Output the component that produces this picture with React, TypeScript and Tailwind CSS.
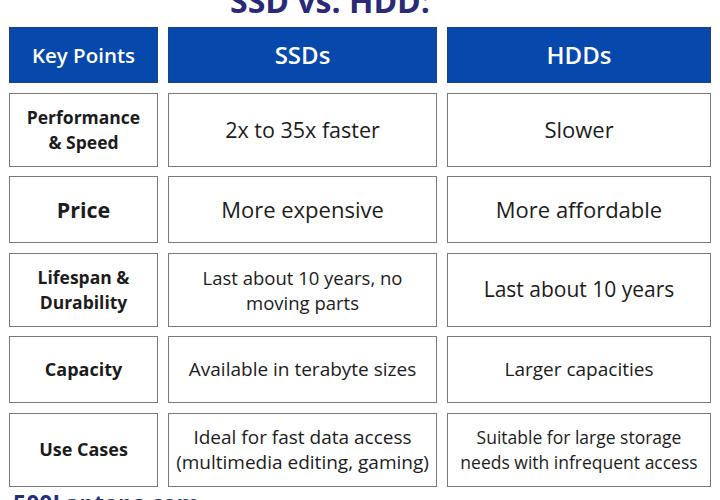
import React from "react";

const font = { fontFamily: '"Open Sans", "Noto Sans", sans-serif' };

function Cell({ children, className = "" }: { children: React.ReactNode; className?: string }) {
  return (
    <div
      className={
        "flex items-center justify-center text-center border-[1.5px] border-[#7a7a7a] bg-white text-[#1c1c1c] leading-[25px] " +
        className
      }
    >
      {children}
    </div>
  );
}

function Head({ children, className = "" }: { children: React.ReactNode; className?: string }) {
  return (
    <div
      className={
        "flex items-center justify-center bg-[#0648ab] border border-[#23407e] text-white font-semibold " +
        className
      }
    >
      {children}
    </div>
  );
}

export default function App() {
  return (
    <div className="w-[720px] h-[500px] bg-white overflow-hidden relative" style={font}>
      <div className="flex flex-col">
        <div className="mt-[-15px] h-[32px] text-center text-[32px] leading-[32px] font-bold text-[#2b2a78] pr-[60px]">
          SSD vs. HDD:
        </div>
        <div className="mt-[10px] ml-[9px] grid grid-cols-[149px_269px_264px] grid-rows-[56px_74px_67px_74px_67px_74px] gap-x-[10px] gap-y-[9.6px]">
          <Head className="text-[20.5px]">Key Points</Head>
          <Head className="text-[24px]">SSDs</Head>
          <Head className="text-[24px]">HDDs</Head>

          <Cell className="font-bold text-[17.5px]">
            Performance
            <br />& Speed
          </Cell>
          <Cell className="text-[21.5px]">2x to 35x faster</Cell>
          <Cell className="text-[22px]">Slower</Cell>

          <Cell className="font-bold text-[21.5px]">Price</Cell>
          <Cell className="text-[22px]">More expensive</Cell>
          <Cell className="text-[22px]">More affordable</Cell>

          <Cell className="font-bold text-[17.5px]">
            Lifespan &amp;
            <br />
            Durability
          </Cell>
          <Cell className="text-[18.5px]">
            Last about 10 years, no
            <br />
            moving parts
          </Cell>
          <Cell className="text-[21px]">Last about 10 years</Cell>

          <Cell className="font-bold text-[18px]">Capacity</Cell>
          <Cell className="text-[19px]">Available in terabyte sizes</Cell>
          <Cell className="text-[19px]">Larger capacities</Cell>

          <Cell className="font-bold text-[18px]">Use Cases</Cell>
          <Cell className="text-[19px]">
            Ideal for fast data access
            <br />
            (multimedia editing, gaming)
          </Cell>
          <Cell className="text-[17.5px]">
            Suitable for large storage
            <br />
            needs with infrequent access
          </Cell>
        </div>
        <div className="mt-[1px] ml-[13px] text-[23px] leading-[30px] font-bold text-[#24307a]">500Laptops.com</div>
      </div>
    </div>
  );
}
